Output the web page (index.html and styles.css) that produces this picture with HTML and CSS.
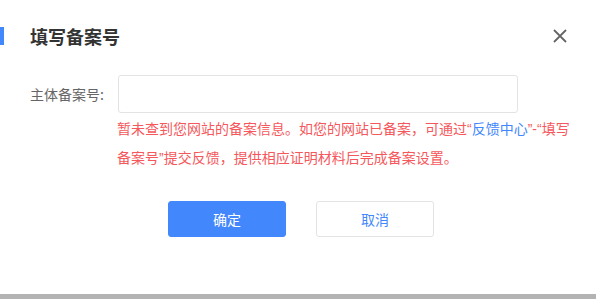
FILE: index.html
```html
<!DOCTYPE html>
<html lang="zh">
<head>
<meta charset="utf-8">
<link rel="stylesheet" href="styles.css">
</head>
<body>
<div class="dialog">
  <div class="header">
    <span class="bar"></span>
    <h1 class="title">填写备案号</h1>
    <span class="close" aria-label="关闭">
      <svg width="14" height="14" viewBox="0 0 14 14"><path d="M1 1L13 13M13 1L1 13" stroke="#666" stroke-width="1.8" fill="none"/></svg>
    </span>
  </div>
  <div class="row">
    <label class="label">主体备案号:</label>
    <input class="input" type="text">
  </div>
  <p class="error">暂未查到您网站的备案信息。如您的网站已备案，可通过<span class="q">“</span><span class="link">反馈中心</span><span class="q">”-“</span>填写<br>备案号<span class="q">”</span>提交反馈，提供相应证明材料后完成备案设置。</p>
  <div class="actions">
    <button class="btn btn-primary">确定</button>
    <button class="btn btn-default">取消</button>
  </div>
</div>
<div class="shade"></div>
</body>
</html>
```
FILE: styles.css
```css
html, body {
  margin: 0;
  padding: 0;
  background: #fff;
}
body {
  width: 596px;
  height: 299px;
  overflow: hidden;
  font-family: "Noto Sans CJK SC", "Noto Sans", sans-serif;
}
.dialog {
  height: 294px;
  box-sizing: border-box;
  padding-top: 27px;
}
.header {
  display: flex;
  align-items: center;
  height: 18px;
}
.bar {
  width: 4px;
  height: 18px;
  background: #4387fd;
}
.title {
  margin: 0 0 0 26px;
  font-size: 18px;
  line-height: 18px;
  font-weight: bold;
  color: #333;
}
.close {
  margin-left: auto;
  margin-right: 29px;
  display: flex;
  width: 14px;
  height: 14px;
}
.row {
  display: flex;
  align-items: center;
  margin-top: 30px;
  padding-left: 30px;
}
.label {
  width: 88px;
  font-size: 14px;
  color: #666;
}
.input {
  box-sizing: border-box;
  width: 400px;
  height: 38px;
  border: 1px solid #e3e3e3;
  border-radius: 3px;
  margin: 0;
  padding: 0 10px;
  outline: none;
}
.error {
  margin: 1px 0 0 117px;
  font-size: 14px;
  line-height: 28px;
  color: #f5585c;
  white-space: nowrap;
}
.q {
  font-family: "Liberation Sans", sans-serif;
}
.link {
  color: #4387fd;
}
.actions {
  display: flex;
  gap: 30px;
  margin-top: 29px;
  padding-left: 168px;
}
.btn {
  box-sizing: border-box;
  width: 118px;
  height: 36px;
  border-radius: 3px;
  font-family: "Noto Sans CJK SC", sans-serif;
  font-size: 14px;
  cursor: pointer;
}
.btn-primary {
  background: #4387fd;
  border: 1px solid #4387fd;
  color: #fff;
}
.btn-default {
  background: #fff;
  border: 1px solid #e3e3e3;
  color: #4387fd;
}
.shade {
  height: 5px;
  background: #b3b3b3;
}
```
